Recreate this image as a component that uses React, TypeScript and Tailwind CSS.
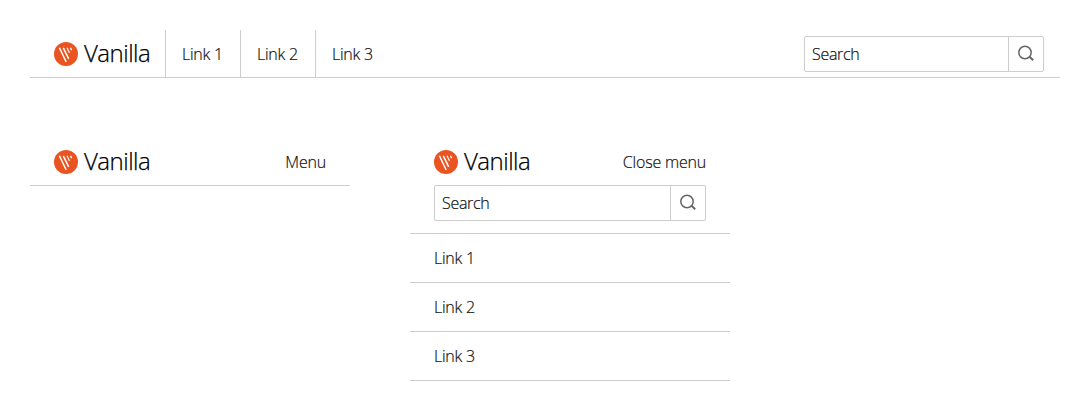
import React from "react";

const LINKS = ["Link 1", "Link 2", "Link 3"];

function Logo() {
  return (
    <a className="flex h-6 shrink-0 items-center gap-[6px]">
      <svg width="24" height="24" viewBox="0 0 24 24" className="shrink-0">
        <circle cx="12" cy="12" r="12" fill="#e95420" />
        <g fill="none" stroke="#fff" strokeWidth="1.3">
          <path d="M5.4 5.8 12.2 20" strokeWidth="1.5" />
          <path d="M9.3 5.8 14.7 16.8" strokeWidth="1.5" />
          <path d="M13 5.8 15.5 11" strokeWidth="1.1" />
          <path d="M16.5 5.8 17.6 8.2" />
        </g>
      </svg>
      <span className="relative -top-px text-[24px] leading-6 tracking-[-0.5px] text-black [-webkit-text-stroke:0.25px_#000]">Vanilla</span>
    </a>
  );
}

function SearchBox({ className }: { className: string }) {
  return (
    <div className={`flex h-9 rounded-[2px] border border-[#cdcdcd] ${className}`}>
      <span className="flex-1 pl-[7px] leading-[34px] tracking-[-0.3px]">Search</span>
      <button className="flex w-[35px] items-center justify-center border-l border-[#cdcdcd]">
        <svg width="16" height="16" viewBox="0 0 16 16" fill="none" stroke="#666" strokeWidth="1.5" className="relative -top-px">
          <circle cx="7" cy="7.5" r="6.2" />
          <path d="M11.3 11.5 15.2 15.2" strokeWidth="2" />
        </svg>
      </button>
    </div>
  );
}

export default function App() {
  return (
    <div className="h-[411px] w-[1090px] bg-white p-[30px] font-['Open_Sans','Noto_Sans',sans-serif] text-[16px] font-light text-[#111] [-webkit-text-stroke:0.2px_#111]">
      <header className="flex h-12 items-center border-b border-[#cdcdcd] pr-4 pl-6">
        <div className="w-[111px]">
          <Logo />
        </div>
        <nav className="flex h-full">
          {LINKS.map((l) => (
            <a key={l} className="w-[75px] border-l border-[#cdcdcd] pl-4 leading-[48px] tracking-[-0.25px] whitespace-nowrap">
              {l}
            </a>
          ))}
        </nav>
        <SearchBox className="relative top-[0.5px] ml-auto w-60" />
      </header>
      <div className="mt-[60px] flex items-start gap-[60px]">
        <header className="flex h-12 w-80 items-center justify-between border-b border-[#cdcdcd] px-6">
          <Logo />
          <span className="tracking-[-0.2px]">Menu</span>
        </header>
        <section className="w-80">
          <header className="flex h-[47px] items-center justify-between px-6">
            <Logo />
            <span className="tracking-[-0.2px]">Close menu</span>
          </header>
          <div className="px-6 pb-3">
            <SearchBox className="w-full" />
          </div>
          <nav className="border-t border-[#cdcdcd]">
            {LINKS.map((l) => (
              <a key={l} className="block h-[49px] border-b border-[#cdcdcd] pl-6 leading-[48px] tracking-[-0.25px]">
                {l}
              </a>
            ))}
          </nav>
        </section>
      </div>
    </div>
  );
}
